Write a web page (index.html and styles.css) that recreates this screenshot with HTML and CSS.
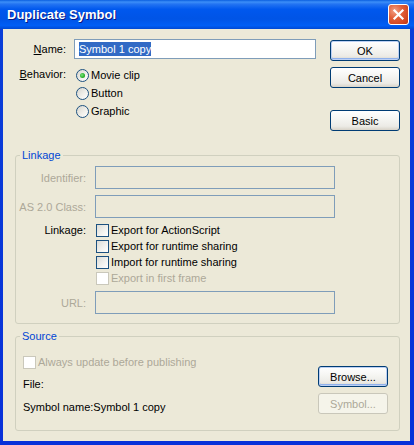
FILE: index.html
```html
<!DOCTYPE html>
<html>
<head>
<meta charset="utf-8">
<title>Duplicate Symbol</title>
<link rel="stylesheet" href="styles.css">
</head>
<body>
<div class="window">
  <div class="titlebar">
    <span class="title">Duplicate Symbol</span>
    <span class="close">
      <svg width="19" height="19" viewBox="0 0 19 19"><path d="M5.5 5.5 L13.5 13.5 M13.5 5.5 L5.5 13.5" stroke="#fff" stroke-width="2.2" stroke-linecap="square"/></svg>
    </span>
  </div>
  <div class="client">
    <div class="top">
      <div class="form">
        <div class="lbl name-lbl"><u>N</u>ame:</div>
        <div class="textbox"><span class="sel">Symbol 1 copy</span></div>
        <div class="lbl"><u>B</u>ehavior:</div>
        <div class="radios">
          <div class="radio-row"><span class="radio"><span class="dot"></span></span><span>Movie clip</span></div>
          <div class="radio-row"><span class="radio"></span><span>Button</span></div>
          <div class="radio-row"><span class="radio"></span><span>Graphic</span></div>
        </div>
      </div>
      <div class="btncol">
        <div class="btn default">OK</div>
        <div class="btn">Cancel</div>
        <div class="btn basic">Basic</div>
      </div>
    </div>

    <div class="group linkage">
      <div class="legend">Linkage</div>
      <div class="lrow r1"><div class="llbl dis">Identifier:</div><div class="dtb"></div></div>
      <div class="lrow r2"><div class="llbl dis">AS 2.0 Class:</div><div class="dtb"></div></div>
      <div class="lrow r3">
        <div class="llbl top-lbl">Linkage:</div>
        <div class="checks">
          <div class="crow"><span class="check"></span><span>Export for ActionScript</span></div>
          <div class="crow"><span class="check"></span><span>Export for runtime sharing</span></div>
          <div class="crow"><span class="check"></span><span>Import for runtime sharing</span></div>
          <div class="crow dis"><span class="check off"></span><span>Export in first frame</span></div>
        </div>
      </div>
      <div class="lrow r4"><div class="llbl dis">URL:</div><div class="dtb"></div></div>
    </div>

    <div class="group source">
      <div class="legend">Source</div>
      <div class="sbody">
        <div class="sleft">
          <div class="crow dis"><span class="check off"></span><span>Always update before publishing</span></div>
          <div class="sline file">File:</div>
          <div class="sline sname">Symbol name:Symbol 1 copy</div>
        </div>
        <div class="sbtns">
          <div class="btn default">Browse...</div>
          <div class="btn disabled">Symbol...</div>
        </div>
      </div>
    </div>
  </div>
</div>
</body>
</html>
```

FILE: styles.css
```css
* { box-sizing: border-box; }
html, body { margin: 0; padding: 0; }
body {
  width: 414px;
  height: 445px;
  overflow: hidden;
  font-family: "Liberation Sans", Arial, sans-serif;
  font-size: 11px;
  color: #000;
  background: #0A39D8;
}
.window {
  width: 414px;
  height: 445px;
  display: flex;
  flex-direction: column;
  background: linear-gradient(180deg, #0A3FD8 0%, #0831D9 100%);
}
.titlebar {
  height: 29px;
  flex: none;
  display: flex;
  align-items: center;
  justify-content: space-between;
  padding: 0 5px 0 7px;
  background: linear-gradient(180deg, #0A5FE0 0%, #3C8FF8 7%, #2374F2 14%, #0058EE 32%, #0054E6 65%, #005EF5 88%, #0049D4 100%);
}
.title {
  color: #fff;
  font-weight: bold;
  font-size: 13px;
  text-shadow: 1px 1px 0 #0A1883;
  padding-bottom: 1px;
}
.close {
  width: 21px;
  height: 21px;
  border: 1px solid #fff;
  border-radius: 3px;
  background: radial-gradient(circle at 30% 30%, #F2A086 0%, #E2603A 40%, #CF431E 80%, #B8350F 100%);
  display: flex;
  align-items: center;
  justify-content: center;
}
.close svg { display: block; }
.client {
  flex: 1;
  margin: 0 4px 4px 3px;
  background: #ECE9D8;
  padding: 10px 10px 0 12px;
}
.top {
  display: flex;
  align-items: flex-start;
}
.form {
  width: 301px;
  display: grid;
  grid-template-columns: 51px 242px;
  column-gap: 8px;
  row-gap: 7px;
}
.lbl {
  text-align: right;
  line-height: 16px;
  white-space: nowrap;
}
.name-lbl { align-self: center; }
.textbox {
  height: 20px;
  border: 1px solid #7F9DB9;
  background: #fff;
  padding-left: 4px;
  display: flex;
  align-items: center;
}
.sel {
  background: #316AC5;
  color: #fff;
  line-height: 14px;
}
.radios { display: flex; flex-direction: column; }
.radio-row {
  height: 18px;
  display: flex;
  align-items: center;
  gap: 2px;
  padding-left: 2px;
}
.radio {
  width: 13px;
  height: 13px;
  border-radius: 50%;
  border: 1px solid #1C5180;
  background: linear-gradient(135deg, #D6D5CE 0%, #F2F1EC 60%, #FFFFFF 100%);
  display: flex;
  align-items: center;
  justify-content: center;
  flex: none;
}
.dot {
  width: 5px;
  height: 5px;
  border-radius: 50%;
  background: radial-gradient(circle at 40% 40%, #7BE37F 0%, #2DB42D 55%, #1A8C1A 100%);
}
.btncol {
  width: 70px;
  margin-left: 14px;
  padding-top: 1px;
  display: flex;
  flex-direction: column;
}
.btn {
  height: 21px;
  border: 1px solid #003C74;
  border-radius: 3px;
  background: linear-gradient(180deg, #FFFFFF 0%, #F6F6F3 40%, #ECEBE6 80%, #D8D3C8 100%);
  display: flex;
  align-items: center;
  justify-content: center;
  white-space: nowrap;
}
.btn.default {
  box-shadow: inset 0 0 0 1px #BCD0F3, inset 0 -1px 0 1px #8FB1EC;
}
.btn + .btn { margin-top: 6px; }
.btn.basic { margin-top: 22px; }
.btn.disabled {
  border-color: #C9C7BA;
  color: #ACA899;
  background: #F5F4EA;
  box-shadow: none;
}
.group {
  border: 1px solid #D0D0BF;
  border-radius: 3px;
}
.linkage { margin-top: 24px; padding-bottom: 9px; }
.source { margin-top: 12px; padding-bottom: 15px; }
.legend {
  margin: -8px 0 0 4px;
  padding: 0 2px;
  line-height: 14px;
  background: #ECE9D8;
  width: fit-content;
  color: #0046D5;
}
.lrow { display: flex; align-items: center; }
.llbl {
  width: 70px;
  margin-right: 9px;
  text-align: right;
  white-space: nowrap;
  flex: none;
}
.top-lbl { line-height: 16px; align-self: flex-start; }
.dis { color: #ACA899; }
.r1 { margin-top: 4px; }
.r2 { margin-top: 6px; }
.r3 { margin-top: 4px; align-items: flex-start; }
.r4 { margin-top: 5px; }
.dtb {
  width: 240px;
  height: 23px;
  border: 1px solid #7F9DB9;
  background: #ECE9D8;
}
.checks { display: flex; flex-direction: column; }
.crow {
  height: 16px;
  display: flex;
  align-items: center;
  gap: 2px;
  padding-left: 1px;
  white-space: nowrap;
}
.check {
  width: 13px;
  height: 13px;
  border: 1px solid #1C5180;
  background: linear-gradient(135deg, #DCDCD7 0%, #F3F3F0 60%, #FFFFFF 100%);
  flex: none;
}
.check.off {
  border-color: #CAC8BB;
  background: #FFFFFF;
}
.sbody {
  display: flex;
  margin-top: 11px;
}
.sleft {
  flex: 1;
  padding-left: 6px;
}
.sline { line-height: 16px; padding-left: 1px; }
.file { margin-top: 6px; }
.sname { margin-top: 7px; }
.sbtns {
  width: 70px;
  margin-right: 11px;
  padding-top: 12px;
  display: flex;
  flex-direction: column;
}
```
